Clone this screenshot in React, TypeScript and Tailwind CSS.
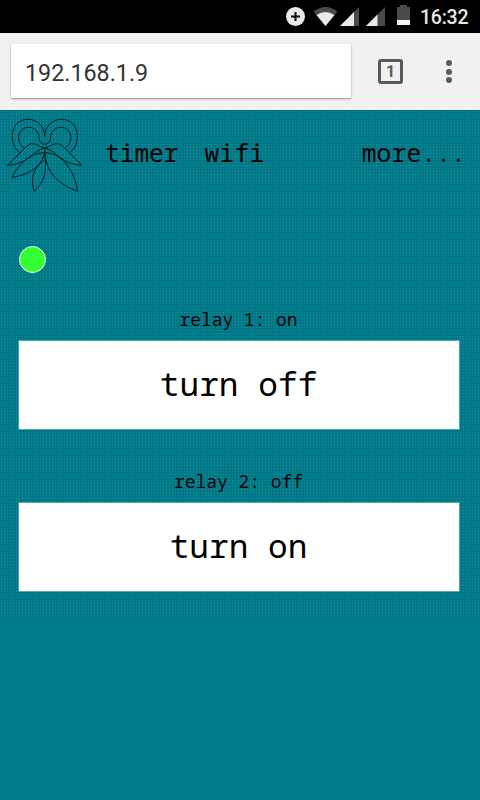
import React from "react";

const mono = "font-['Noto_Sans_Mono','DejaVu_Sans_Mono',monospace] text-black whitespace-pre";

function StatusBar() {
  return (
    <div className="h-[33px] bg-black flex items-center justify-end">
      <svg width="210" height="33" viewBox="270 0 210 33">
        <circle cx="295.5" cy="16.500" r="9.500" fill="#e9e9e9" />
        <path d="M291 16.500h9M295.500 12v9" stroke="#000" strokeWidth="2" />
        <path d="M313.500 11.500Q325.500 2.500 337.500 11.500L325.500 26Z" fill="#4a4a4a" />
        <path d="M316.500 15Q325.500 9 334.500 15L325.500 26Z" fill="#e9e9e9" />
        <path d="M359 7V26H340Z" fill="#4a4a4a" />
        <path d="M354 12V26H340Z" fill="#e9e9e9" />
        <path d="M385 7V26H366Z" fill="#4a4a4a" />
        <path d="M377.500 14.500V26H366Z" fill="#e9e9e9" />
        <path d="M400 5h7v2h3v13h-13V7h3Z" fill="#4a4a4a" />
        <path d="M397 20h13v5h-13Z" fill="#f4f4f4" />
        <text x="420" y="24" fontSize="19.500" fontWeight="500" fill="#e6e6e6" className="font-['Roboto',sans-serif]" textLength="48.500">16:32</text>
      </svg>
    </div>
  );
}

function AddressBar() {
  return (
    <div className="h-[77px] bg-[#f1f1f1] flex items-center">
      <div className="ml-[11px] mb-px w-[340px] h-[54px] bg-white shadow-[0_1px_2px_rgba(0,0,0,0.4)] rounded-[1px] flex items-center pl-[14px] pt-[4px]">
        <span className="font-['Roboto',sans-serif] text-[23.300px] text-[#333]">192.168.1.9</span>
      </div>
      <div className="ml-[27px] size-[25px] border-[3px] border-[#5a5a5a] rounded-[3px] flex items-center justify-center font-['Roboto',sans-serif] font-bold text-[16px] leading-none text-[#5a5a5a]">1</div>
      <div className="ml-[43px] flex flex-col gap-[2.500px]">
        <i className="size-[6px] rounded-full bg-[#5a5a5a]" />
        <i className="size-[6px] rounded-full bg-[#5a5a5a]" />
        <i className="size-[6px] rounded-full bg-[#5a5a5a]" />
      </div>
    </div>
  );
}

function Logo() {
  return (
    <svg className="ml-[6px] mt-[6px] shrink-0" width="80" height="80" viewBox="6 116 80 80" fill="none" stroke="#001a1e" strokeWidth="1">
      <path d="M19.500 152.500C8 144 9.500 119.300 28 119.300C38 119.300 44.700 127 44.700 136.500C44.700 127 51.500 119.300 61.500 119.300C80 119.300 81.500 144 70 152.500" />
      <path d="M24 148C14.500 141 18.500 127.300 28.500 127.300C35 127.300 39 132 39 138.500A5.750 5.750 0 0 0 50.500 138.500C50.500 132 54.500 127.300 61 127.300C71 127.300 75 141 65.500 148" />
      <path d="M44.700 148C39 146.500 37 143.500 32 143.700C28.500 144 27 146 24 149L7.500 165.300C29 164 31 151.500 44.700 148C58 151.500 60 164 82 165.300L65.500 149C62.500 146 61 144 57.500 143.700C52.500 143.500 50.500 146.500 44.700 148Z" />
      <path d="M44.700 148V156M44.700 152.700C31 153 19 163 12 177.300C29 175 42 166 44.700 152.700" />
      <path d="M44.700 160C36 166 29 176 34.300 191.300C46 180 46.500 170 44.700 152.700C46.500 174 60 185 77.500 191.300C75 172 63 153 44.700 152.700" />
    </svg>
  );
}

function Relay({ status, action }: { status: string; action: string }) {
  return (
    <div className="h-[162px] mx-[19px] w-[440px]">
      <div className={`${mono} h-[34px] pt-[2px] pr-[1px] text-center text-[17.900px] leading-[20px]`}>{status}</div>
      <button className={`${mono} block w-full h-[88px] pb-[2px] pr-[1px] bg-white text-[32.800px] leading-none shadow-[0_0_0_0.5px_#9ccbd0]`}>{action}</button>
    </div>
  );
}

export default function App() {
  return (
    <div className="w-[480px] h-[800px] overflow-hidden bg-[#007b8b]">
      <StatusBar />
      <AddressBar />
      <main className="h-[508px] shadow-[inset_0_1px_0_#006d7a] bg-[#007888] bg-[radial-gradient(circle_at_1.500px_1.500px,#1c929c_0.5px,transparent_0.9px)] bg-[length:3px_3px]">
        <nav className="h-[136px] flex items-start">
          <Logo />
          <span className={`${mono} ml-[19px] mt-[28px] text-[24.500px] leading-[30px]`}>timer</span>
          <span className={`${mono} ml-[26px] mt-[28px] text-[24.500px] tracking-[0.3px] leading-[30px]`}>wifi</span>
          <span className={`${mono} ml-auto mr-[14px] mt-[28px] text-[24.500px] tracking-[0.2px] leading-[30px]`}>more...</span>
        </nav>
        <div className="ml-[19px] size-[27px] rounded-full border-[1.5px] border-[#e8fff0] bg-[#33ff33]" />
        <div className="pt-[34px]">
          <Relay status="relay 1: on" action="turn off" />
          <Relay status="relay 2: off" action="turn on" />
        </div>
      </main>
    </div>
  );
}
